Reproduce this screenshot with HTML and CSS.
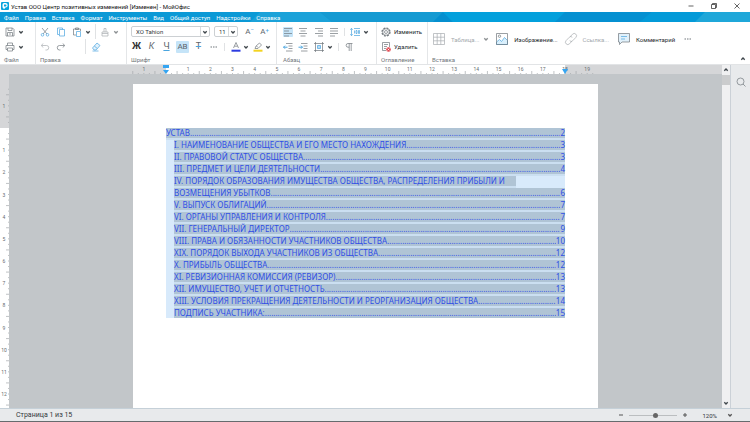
FILE: index.html
```html
<!DOCTYPE html>
<html lang="ru">
<head>
<meta charset="utf-8">
<title>Устав ООО Центр позитивных изменений - МойОфис</title>
<link rel="stylesheet" href="styles.css">
</head>
<body>
<svg class="defs" aria-hidden="true">
  <symbol id="chev" viewBox="0 0 6 6"><path d="M1.300 2.200 3 4 4.700 2.200" stroke-width="1.300"/></symbol>
</svg>
<div class="app">
  <header class="titlebar">
    <svg class="logo" viewBox="0 0 8 8"><rect width="8" height="8" rx="1" fill="#08a4dd"/><path d="M1.500 2.500a1.500 1.500 0 0 1 1.500-1.500h1.500a2.200 2.200 0 0 1 0 4.400L3 7.200 1.500 5.200z" fill="#fff"/><path d="M3 4.500V2.500h1.500a1 1 0 0 1 0 2z" fill="#08a4dd"/></svg>
    <h1>Устав ООО Центр позитивных изменений [Изменен] - МойОфис</h1>
    <div class="window-buttons">
      <button aria-label="Свернуть"><svg viewBox="0 0 8 8"><path d="M1.500 4h5"/></svg></button>
      <button aria-label="Развернуть"><svg viewBox="0 0 8 8"><path d="M1.500 2.500h4v4h-4zM2.500 2.500v-1h4v4h-1"/></svg></button>
      <button aria-label="Закрыть"><svg viewBox="0 0 8 8"><path d="M1.500 1.500l5 5M6.500 1.500l-5 5"/></svg></button>
    </div>
  </header>
  <nav class="menu">
    <svg class="facets" viewBox="0 0 750 10" preserveAspectRatio="none" aria-hidden="true">
      <path fill="#1ba2d9" d="M260 0H320L332 10H250z"/>
      <path fill="#159ad2" d="M320 0H443L433 10H332z"/>
      <path fill="#058fcf" d="M443 0L453 10H433z"/>
      <path fill="#03a0dc" d="M443 0H565L555 10H453z"/>
      <path fill="#0590d1" d="M565 0H652L640 10H555z"/>
      <path fill="#039ad8" d="M652 0H705L695 10H640z"/>
      <path fill="#1fa7d9" d="M705 0H750V10H695z"/>
    </svg>
    <a href="#">Файл</a><a href="#">Правка</a><a href="#">Вставка</a><a href="#">Формат</a><a href="#">Инструменты</a><a href="#">Вид</a><a href="#">Общий доступ</a><a href="#">Надстройки</a><a href="#">Справка</a>
  </nav>
  <div class="toolbar">
    <section class="group g-file">
      <div class="row">
        <button aria-label="Сохранить"><svg viewBox="0 0 10 10"><path d="M1 1h6.500L9 2.500V9H1zM3 1v2.500h4V1M2.500 9V5.500h5V9M4 7h2"/></svg></button>
        <button class="drop" aria-label="Варианты сохранения"><svg><use href="#chev"/></svg></button>
      </div>
      <div class="row">
        <button aria-label="Печать"><svg viewBox="0 0 10 10"><path d="M2.500 3.500V1h5v2.500M2.500 7.500H1v-4h8v4H7.500M2.500 6h5v3h-5z"/></svg></button>
        <button class="drop" aria-label="Варианты печати"><svg><use href="#chev"/></svg></button>
      </div>
      <h2>Файл</h2>
    </section>
    <section class="group g-edit">
      <div class="row">
        <button aria-label="Вырезать"><svg viewBox="0 0 10 10"><path d="M2 1l5 6M8 1L3 7"/><g stroke="#4aa5df"><circle cx="2.500" cy="7.800" r="1.300"/><circle cx="7.500" cy="7.800" r="1.300"/></g></svg></button>
        <button class="sp6" aria-label="Копировать"><svg viewBox="0 0 10 10"><path stroke="#4aa5df" d="M3 7.500H1.500V1h5v1.500"/><path stroke="#4aa5df" d="M3.500 2.500h5V9h-5z"/></svg></button>
        <button class="sp6" aria-label="Вставить"><svg viewBox="0 0 10 10"><path d="M4 8H1.500V2h7v2M3.500 2.500V1h3v1.500z"/><path stroke="#4aa5df" d="M4.500 4.500h4V9.500h-4z"/></svg></button>
        <button class="drop" aria-label="Варианты вставки"><svg><use href="#chev"/></svg></button>
        <i class="split"></i>
        <button class="off" aria-label="Формат по образцу"><svg viewBox="0 0 10 10"><path d="M4 5V1.500h2V5M2 5h6v1.500H2zM2 6.500V9h6V6.500"/></svg></button>
        <button class="drop off" aria-label="Варианты формата"><svg><use href="#chev"/></svg></button>
      </div>
      <div class="row">
        <button class="off" aria-label="Отменить"><svg viewBox="0 0 10 10"><path d="M3 1.500L1.500 3.500 3 5.500M1.500 3.500h5a2.200 2.200 0 0 1 0 4.500H5.500"/></svg></button>
        <button class="sp6" aria-label="Повторить"><svg viewBox="0 0 10 10"><path d="M7 1.500l1.500 2L7 5.500M8.500 3.500h-5a2.200 2.200 0 0 0 0 4.500h1"/></svg></button>
        <span class="gap"></span>
        <i class="split"></i>
        <button class="sp1" aria-label="Очистить формат"><svg viewBox="0 0 10 10"><path stroke="#4aa5df" fill="#e3f2fc" d="M1.500 6L6 1l3 2.500L5 8H3z"/><path stroke="#4aa5df" d="M3.300 4l3 2.500M1.500 9h6"/></svg></button>
      </div>
      <h2>Правка</h2>
    </section>
    <section class="group g-font">
      <div class="row">
        <span class="pick font-pick"><select aria-label="Шрифт"><option>XO Tahion</option></select><svg><use href="#chev"/></svg></span>
        <span class="pick size-pick"><select aria-label="Размер"><option>11</option></select><svg><use href="#chev"/></svg></span>
        <button class="letter small sp6" aria-label="Уменьшить шрифт">A<sup>−</sup></button>
        <button class="letter small sp4" aria-label="Увеличить шрифт">A<sup>+</sup></button>
      </div>
      <div class="row">
        <button class="letter b">Ж</button>
        <button class="letter i sp4">К</button>
        <button class="letter u sp4">Ч</button>
        <button class="letter on sp4">АВ</button>
        <button class="letter s sp4">Т</button>
        <button class="sp5" aria-label="Ещё"><svg viewBox="0 0 10 10"><path stroke-width="1.200" stroke-dasharray="1.500 1" d="M1.500 5h7"/></svg></button>
        <i class="split short"></i>
        <button class="sp1" aria-label="Цвет текста"><svg viewBox="0 0 10 10"><path d="M2.500 6L5 .5 7.500 6M3.500 4.200h3"/><path stroke="#2c3be0" stroke-width="2" d="M.5 8.700h9"/></svg></button>
        <button class="drop near" aria-label="Выбор цвета"><svg><use href="#chev"/></svg></button>
        <button class="sp4" aria-label="Выделение"><svg viewBox="0 0 10 10"><path d="M2 6.500L3 4l3.500-3L8.500 3 5 6.500zM3.500 4L5 5.500"/><path stroke="#f3d321" stroke-width="2" d="M.5 8.700h9"/></svg></button>
        <button class="drop near" aria-label="Цвет выделения"><svg><use href="#chev"/></svg></button>
      </div>
      <h2>Шрифт</h2>
    </section>
    <section class="group g-para">
      <div class="row">
        <button class="on" aria-label="По левому краю"><svg viewBox="0 0 10 10"><path d="M1 1.500h8M1 4h5M1 6.500h8M1 9h5"/></svg></button>
        <button class="sp5" aria-label="По центру"><svg viewBox="0 0 10 10"><path d="M1 1.500h8M2.500 4h5M1 6.500h8M2.500 9h5"/></svg></button>
        <button class="sp6" aria-label="По правому краю"><svg viewBox="0 0 10 10"><path d="M1 1.500h8M4 4h5M1 6.500h8M4 9h5"/></svg></button>
        <button class="sp5" aria-label="По ширине"><svg viewBox="0 0 10 10"><path d="M1 1.500h8M1 4h8M1 6.500h8M1 9h5"/></svg></button>
        <i class="split short"></i>
        <button aria-label="Интервал"><svg viewBox="0 0 10 10"><path stroke="#4aa5df" d="M1.500 1.500v7M.3 2.800L1.500 1.300l1.200 1.500M.3 7.200l1.200 1.500 1.200-1.500M4 1.500h6M4 8.500h6M4.500 3.500v3M6 3.500h1v3H6zM8.500 3.500h1v3h-1z"/></svg></button>
        <button class="drop" aria-label="Выбор интервала"><svg><use href="#chev"/></svg></button>
      </div>
      <div class="row">
        <button aria-label="Уменьшить отступ"><svg viewBox="0 0 10 10"><path d="M3 1.500h6.500M5.500 4h4M5.500 6.500h4M3 9h6.500"/><path stroke="#4aa5df" stroke-width="1" d="M4.500 5.200H.5M2 3.700L.5 5.200 2 6.700"/></svg></button>
        <button class="sp5" aria-label="Увеличить отступ"><svg viewBox="0 0 10 10"><path d="M3 1.500h6.500M5.500 4h4M5.500 6.500h4M3 9h6.500"/><path stroke="#4aa5df" stroke-width="1" d="M.5 5.200h4M3 3.700l1.500 1.500L3 6.700"/></svg></button>
        <button class="sp6" aria-label="Границы"><svg viewBox="0 0 10 10"><path d="M1.500 0v10M8.500 0v10M0 1.500h10M0 8.500h10"/><path fill="#b9dcf4" stroke="#4aa5df" d="M3.500 3.500h3v3h-3z"/></svg></button>
        <button class="drop" aria-label="Выбор границ"><svg><use href="#chev"/></svg></button>
        <i class="split short"></i>
        <button aria-label="Непечатаемые символы"><svg viewBox="0 0 10 10"><path d="M8.500 1.500H4a1.800 1.800 0 0 0 0 3.700h1.200M5.200 1.500V9M7.200 1.500V9"/></svg></button>
      </div>
      <h2>Абзац</h2>
    </section>
    <section class="group g-toc">
      <div class="row"><button class="text"><svg viewBox="0 0 10 10"><circle cx="5" cy="5" r="4" stroke-width="1.200" stroke-dasharray="2 1.140"/><circle cx="5" cy="5" r="3.300"/><circle cx="5" cy="5" r="1.500"/></svg>Изменить</button></div>
      <div class="row"><button class="text"><svg viewBox="0 0 10 10"><path d="M5 8.500H1.500v-8h7V5M3 2.500h4M3 4.500h3M3 6.500h2"/><circle cx="7.500" cy="7.500" r="2.300" fill="#e34850" stroke="none"/><path stroke="#fff" d="M6.600 6.600l1.800 1.800M8.400 6.600L6.600 8.400"/></svg>Удалить</button></div>
      <h2>Оглавление</h2>
    </section>
    <section class="group g-insert">
      <div class="row tall">
        <button class="text off"><svg class="big" viewBox="0 0 14 14"><path d="M1.500 1.500h11v11h-11zM1.500 5.200h11M1.500 8.800h11M5.200 1.500v11M8.800 1.500v11"/></svg>Таблица...</button>
        <button class="drop off sp4" aria-label="Размер таблицы"><svg><use href="#chev"/></svg></button>
        <button class="text sp6"><svg class="big" viewBox="0 0 14 14"><path fill="#d9effc" stroke="#4aa5df" d="M1.500 10l3-2.500 2 2 3-4 3 3v4h-11z"/><path d="M1.500 1.500h11v11h-11z"/><circle cx="4.500" cy="4.200" r="1.200"/></svg>Изображение...</button>
        <button class="text off sp6"><svg class="big" viewBox="0 0 14 14"><path d="M6 5l2.500-2.800a2.300 2.300 0 0 1 3.400 3.200L8.700 8.700a2 2 0 0 1-3 0M8 9l-2.500 2.800a2.300 2.300 0 0 1-3.400-3.200l3.200-3.300a2 2 0 0 1 3 0"/></svg>Ссылка...</button>
        <button class="text sp8"><svg class="big" viewBox="0 0 14 14"><path fill="#e1f1fb" d="M1.500 1.500h11v8.500H5L2.500 12.500V10h-1z"/><path stroke="#4aa5df" d="M4 4.500h6M4 7h4"/></svg>Комментарий</button>
        <button class="sp8" aria-label="Ещё вставка"><svg viewBox="0 0 10 10"><path stroke-width="1.200" stroke-dasharray="1.500 1" d="M1.500 5h7"/></svg></button>
      </div>
      <h2>Вставка</h2>
      <button class="collapse" aria-label="Свернуть панель"><svg class="up"><use href="#chev"/></svg></button>
    </section>
  </div>
  <div class="work">
    <div class="main">
      <svg class="hruler" id="hruler"></svg>
      <div class="canvas">
        <svg class="vruler" id="vruler"></svg>
        <main class="page">
          <div class="toc">
            <a href="#"><span>УСТАВ</span><i></i><b>2</b></a>
            <a class="sub" href="#"><span>I. НАИМЕНОВАНИЕ ОБЩЕСТВА И ЕГО МЕСТО НАХОЖДЕНИЯ</span><i></i><b>3</b></a>
            <a class="sub" href="#"><span>II. ПРАВОВОЙ СТАТУС ОБЩЕСТВА</span><i></i><b>3</b></a>
            <a class="sub" href="#"><span>III. ПРЕДМЕТ И ЦЕЛИ ДЕЯТЕЛЬНОСТИ</span><i></i><b>4</b></a>
            <a class="sub open" href="#"><span>IV. ПОРЯДОК ОБРАЗОВАНИЯ ИМУЩЕСТВА ОБЩЕСТВА, РАСПРЕДЕЛЕНИЯ ПРИБЫЛИ И</span></a>
            <a class="sub" href="#"><span>ВОЗМЕЩЕНИЯ УБЫТКОВ</span><i></i><b>6</b></a>
            <a class="sub" href="#"><span>V. ВЫПУСК ОБЛИГАЦИЙ</span><i></i><b>7</b></a>
            <a class="sub" href="#"><span>VI. ОРГАНЫ УПРАВЛЕНИЯ И КОНТРОЛЯ</span><i></i><b>7</b></a>
            <a class="sub" href="#"><span>VII. ГЕНЕРАЛЬНЫЙ ДИРЕКТОР</span><i></i><b>9</b></a>
            <a class="sub" href="#"><span>VIII. ПРАВА И ОБЯЗАННОСТИ УЧАСТНИКОВ ОБЩЕСТВА</span><i></i><b>10</b></a>
            <a class="sub" href="#"><span>XIX. ПОРЯДОК ВЫХОДА УЧАСТНИКОВ ИЗ ОБЩЕСТВА</span><i></i><b>12</b></a>
            <a class="sub" href="#"><span>X. ПРИБЫЛЬ ОБЩЕСТВА</span><i></i><b>12</b></a>
            <a class="sub" href="#"><span>XI. РЕВИЗИОННАЯ КОМИССИЯ (РЕВИЗОР)</span><i></i><b>13</b></a>
            <a class="sub" href="#"><span>XII. ИМУЩЕСТВО, УЧЕТ И ОТЧЕТНОСТЬ</span><i></i><b>13</b></a>
            <a class="sub" href="#"><span>XIII. УСЛОВИЯ ПРЕКРАЩЕНИЯ ДЕЯТЕЛЬНОСТИ И РЕОРГАНИЗАЦИЯ ОБЩЕСТВА</span><i></i><b>14</b></a>
            <a class="sub" href="#"><span>ПОДПИСЬ УЧАСТНИКА:</span><i></i><b>15</b></a>
          </div>
        </main>
      </div>
    </div>
    <div class="scroll">
      <button aria-label="Вверх"><svg class="up"><use href="#chev"/></svg></button>
      <span class="thumb"></span>
      <button aria-label="Вниз"><svg><use href="#chev"/></svg></button>
    </div>
    <aside class="side"><button aria-label="Поиск"><svg viewBox="0 0 10 10"><circle cx="4.500" cy="4.500" r="3.500"/><path d="M7 7l2.500 2.500"/></svg></button></aside>
  </div>
  <footer class="status">
    <span>Страница 1 из 15</span>
    <div class="zoom">
      <button aria-label="Уменьшить"><svg viewBox="0 0 6 6"><path stroke-width="1" d="M1 3h4"/></svg></button>
      <input type="range" min="0" max="100" value="54" aria-label="Масштаб">
      <button aria-label="Увеличить"><svg viewBox="0 0 6 6"><path stroke-width="1" d="M1 3h4M3 1v4"/></svg></button>
      <output>120%</output>
      <button aria-label="Выбор масштаба"><svg><use href="#chev"/></svg></button>
    </div>
  </footer>
</div>
<script src="rulers.js"></script>
</body>
</html>
```
FILE: styles.css
```css
* { box-sizing: border-box; }
body { margin: 0; font-family: Roboto, "Noto Sans", sans-serif; font-size: 6px; color: #33383c; }
h1, h2 { margin: 0; font-weight: 400; font-size: inherit; }
a { color: inherit; text-decoration: none; }
button { display: flex; align-items: center; justify-content: center; flex: none; padding: 0; border: 0; border-radius: 1px; background: none; font: inherit; color: inherit; min-width: 10px; height: 10px; }
svg { display: block; width: 10px; height: 10px; flex: none; fill: none; stroke: #70777c; stroke-width: .7; }
.defs { position: absolute; width: 0; height: 0; }
.app { display: flex; flex-direction: column; height: 100vh; border-bottom: 1px solid #666b6e; background: #fff; }

.titlebar { display: flex; align-items: center; gap: 2px; height: 12px; padding: 0 8px 0 1px; flex: none; }
.logo { width: 8px; height: 8px; stroke: none; }
.titlebar h1 { flex: 1; color: #111; }
.window-buttons { display: flex; gap: 13px; }
.window-buttons svg { width: 8px; height: 8px; stroke: #222; }

.menu { position: relative; display: flex; align-items: center; gap: 6px; height: 10px; padding: 0 4px; flex: none; background: #0b99d6; color: #fff; }
.menu a { position: relative; }
.facets { position: absolute; inset: 0; width: 100%; height: 100%; stroke: none; }

.toolbar { display: flex; height: 43px; flex: none; border-bottom: 1px solid #e2e4e6; }
.group { display: flex; flex-direction: column; padding: 2px 4px 0; border-right: 1px solid #e4e6e8; white-space: nowrap; }
.group h2 { color: #70767b; line-height: 8px; margin-top: 2px; }
.row { display: flex; align-items: center; height: 15px; }
.row.tall { height: 30px; }
.g-file { width: 36px; padding-left: 5px; }
.g-file h2 { margin-left: -1px; }
.g-edit { width: 91px; }
.g-font { width: 150px; }
.g-para { width: 100px; padding-left: 6px; }
.g-toc { width: 51px; }
.g-insert { flex: 1; position: relative; border-right: 0; }
.drop { min-width: 6px; margin-left: 3px; }
.drop.near { margin-left: 2px; }
.drop svg, .pick svg, .collapse svg, .scroll svg { width: 6px; height: 6px; stroke: #3f464b; }
.up { transform: rotate(180deg); }
.off { color: #a2a8ac; }
.off svg { opacity: .6; }
.sp1 { margin-left: 1px; }
.sp4 { margin-left: 4px; }
.sp5 { margin-left: 5px; }
.sp6 { margin-left: 6px; }
.sp8 { margin-left: 8px; }
.gap { width: 15px; }
.split { width: 1px; height: 15px; margin: 0 4px; background: #e0e2e4; }
.split.short { height: 8px; margin: 0 5px; }
.on { background: #c5e4f8; }
.pick { position: relative; display: flex; height: 11px; border: 1px solid #ccd0d3; border-radius: 2px; }
.pick select { appearance: none; width: 100%; padding: 0 4px; border: 0; background: none; font: inherit; color: #33383c; }
.pick svg { align-self: center; margin-right: 1px; }
.pick::after { content: ""; position: absolute; top: 0; bottom: 0; right: 8px; width: 1px; background: #d8dbdd; }
.font-pick { width: 79px; }
.size-pick { width: 24px; margin-left: 4px; }
.letter { font-size: 9px; line-height: 9px; min-width: 11px; color: #5d656a; }
.letter.small { font-size: 8px; }
.letter sup { font-size: 6px; line-height: 6px; color: #4aa5df; align-self: flex-start; }
.b { font-weight: 700; color: #333; }
.i { font-style: italic; }
.u { text-decoration: underline #4aa5df; }
.s { text-decoration: line-through #4aa5df; }
.letter.on { font-size: 8px; min-width: 13px; height: 12px; }
.text { gap: 3px; color: #24292d; }
.text.off { color: #a2a8ac; }
.g-insert .text { gap: 5px; }
.big { width: 14px; height: 14px; }
.collapse { position: absolute; right: 2px; bottom: 0; }

.work { display: flex; flex: 1; min-height: 0; }
.main { display: flex; flex-direction: column; flex: 1; min-width: 0; }
.hruler { width: 100%; height: 9px; background: #d5d6d8; }
.canvas { display: flex; flex: 1; min-height: 0; background: #c2c6c9; }
.vruler { width: 9px; height: 100%; background: #d5d6d8; }
.hruler text, .vruler text { fill: #666c70; stroke: none; font-size: 5px; text-anchor: middle; }
.page { width: 465px; margin: 10px 0 0 124px; padding: 44px 33px 0; background: #fff; }
.toc { background: #d8eafb; font-family: "Noto Sans", sans-serif; font-size: 8px; line-height: 10px; color: #2f4fe6; }
.toc a { display: flex; height: 12px; border-bottom: 2px solid #cbdff1; background: #b0c4d5; white-space: nowrap; }
.toc a:last-child { height: 10px; border-bottom: 0; }
.toc .sub { margin-left: 8px; }
.toc .open { width: 342px; }
.toc i { flex: 1; overflow: hidden; font-style: normal; }
.toc i::before { content: "................................................................................................................................................................................................"; }
.toc b { font-weight: 400; }

.scroll { display: flex; flex-direction: column; align-items: center; width: 8px; background: #f0f0f1; }
.scroll button { min-width: 8px; }
.thumb { width: 100%; height: 10px; margin-bottom: auto; background: #cbcccd; }
.side { width: 20px; padding: 12px 5px; border-left: 1px solid #cbd1d7; background: #e8eaec; }

.status { display: flex; align-items: center; justify-content: space-between; height: 13px; flex: none; padding: 0 15px 0 16px; border-top: 1px solid #c5d0d8; background: #e8eaec; font-size: 7px; }
.zoom { display: flex; align-items: center; font-size: 6px; }
.zoom svg { width: 6px; height: 6px; stroke: #555; }
.zoom input { appearance: none; width: 48px; height: 5px; margin: 0 3px; background: linear-gradient(#bbbec0, #bbbec0) center / 100% 1px no-repeat; }
.zoom input::-webkit-slider-thumb { appearance: none; width: 5px; height: 5px; border-radius: 50%; background: #666; }
.zoom output { margin: 0 8px 0 12px; }
```
FILE: rulers.js
```js
// Centimetre rulers: both share one scale and start at the page margin.
const CM = 399 / 18;
const line = (a, b, c, d) => `<path d="M${a} ${b}L${c} ${d}" stroke="#a5a9ac"/>`;

let h = '<rect x="166" y="0" width="399" height="9" fill="#fff" stroke="none"/>';
for (let q = -6; q <= 77; q++) {
  const x = 166 + q * CM / 4;
  if (q % 4) h += line(x, q % 2 ? 8 : 6, x, 9);
  else if (q) h += `<text x="${x}" y="6">${Math.abs(q / 4)}</text>` + line(x, 8, x, 9);
}
h += '<path d="M163 0h6v3h-6zM163 5h6l-3 4z" fill="#35a5f2" stroke="none"/>';
h += '<path d="M562 4h6l-3 5z" fill="#35a5f2" stroke="none"/>';
document.getElementById("hruler").innerHTML = h;

let v = '<rect x="0" y="54" width="9" height="400" fill="#fff" stroke="none"/>';
for (let q = -7; q <= 50; q++) {
  const y = 54 + q * CM / 4;
  if (q % 4) v += line(q % 2 ? 8 : 6, y, 9, y);
  else if (q) v += `<text x="4" y="${y + 2}">${Math.abs(q / 4)}</text>` + line(8, y, 9, y);
}
document.getElementById("vruler").innerHTML = v;
```
